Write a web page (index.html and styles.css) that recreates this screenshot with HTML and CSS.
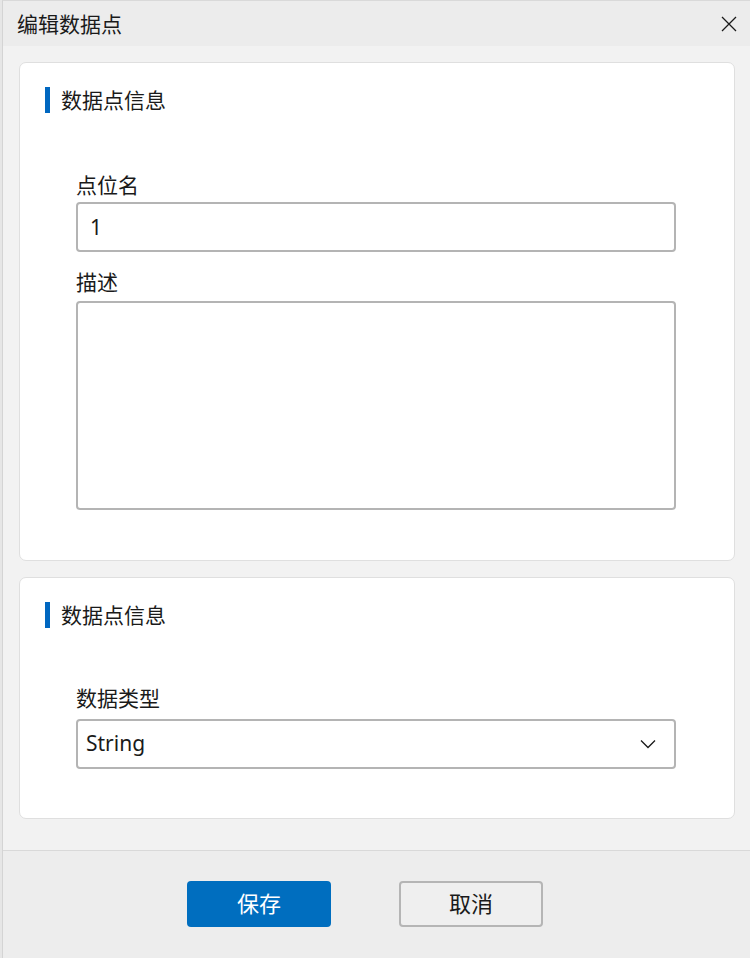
FILE: index.html
```html
<!DOCTYPE html>
<html lang="zh-CN">
<head>
<meta charset="utf-8">
<title>编辑数据点</title>
<link rel="stylesheet" href="styles.css">
</head>
<body>
<div class="strip"></div>
<div class="window">
  <header class="titlebar">
    <span class="title">编辑数据点</span>
    <span class="close" aria-label="关闭">
      <svg width="16" height="16" viewBox="0 0 16 16"><path d="M1 1 L15 15 M15 1 L1 15" stroke="#1a1a1a" stroke-width="1.3" fill="none"/></svg>
    </span>
  </header>
  <main class="content">
    <section class="card card-info">
      <div class="section-head"><span class="bar"></span><span class="section-title">数据点信息</span></div>
      <div class="form">
        <label class="label label-first">点位名</label>
        <div class="input">1</div>
        <label class="label label-second">描述</label>
        <div class="textarea"></div>
      </div>
    </section>
    <section class="card card-type">
      <div class="section-head"><span class="bar"></span><span class="section-title">数据点信息</span></div>
      <div class="form">
        <label class="label label-type">数据类型</label>
        <div class="input select">
          <span>String</span>
          <svg class="chev" width="16" height="10" viewBox="0 0 16 10"><path d="M1 1.5 L8 8.5 L15 1.5" stroke="#1a1a1a" stroke-width="1.3" fill="none"/></svg>
        </div>
      </div>
    </section>
  </main>
  <footer class="footer">
    <button class="btn btn-primary">保存</button>
    <button class="btn btn-default">取消</button>
  </footer>
</div>
</body>
</html>
```
FILE: styles.css
```css
* { box-sizing: border-box; }
html, body { margin: 0; padding: 0; }
body {
  width: 750px;
  height: 958px;
  display: flex;
  font-family: "Noto Sans", "Noto Sans CJK SC", sans-serif;
  color: #1a1a1a;
  background: #f4f4f4;
  overflow: hidden;
}
.strip { width: 2px; background: #e6e6e6; }
.window {
  flex: 1;
  display: flex;
  flex-direction: column;
  border-left: 1px solid #d4d4d4;
  border-top: 1px solid #d9d9d9;
}
.titlebar {
  height: 45px;
  background: #ececec;
  display: flex;
  align-items: center;
  justify-content: space-between;
  padding: 0 13px 0 14px;
}
.title { font-size: 21px; line-height: 26px; margin-top: 1px; }
.close { display: flex; margin-top: 1px; }
.content {
  flex: 1;
  background: #f2f2f2;
  padding: 16px 15px 0 16px;
  display: flex;
  flex-direction: column;
  gap: 16px;
}
.card {
  background: #fff;
  border: 1px solid #dfdfdf;
  border-radius: 7px;
  padding: 24px 25px;
}
.section-head { display: flex; align-items: center; height: 26px; }
.bar { width: 5px; height: 26px; background: #0067c0; }
.section-title { font-size: 21px; margin-left: 11px; line-height: 26px; margin-top: -1px; }
.form { padding: 0 33px 0 31px; display: flex; flex-direction: column; }
.label { font-size: 21px; line-height: 26px; }
.label-first { margin-top: 59px; margin-bottom: 4px; }
.label-second { margin-top: 17px; margin-bottom: 6px; }
.label-type { margin-top: 57px; margin-bottom: 8px; }
.input {
  height: 50px;
  border: 2px solid #b4b4b4;
  border-radius: 4px;
  font-size: 21px;
  display: flex;
  align-items: center;
  padding-left: 12px;
}
.textarea {
  height: 209px;
  border: 2px solid #b4b4b4;
  border-radius: 4px;
  margin-bottom: 26px;
}
.card-type .input { margin-bottom: 25px; }
.select { justify-content: space-between; padding-left: 8px; padding-right: 18px; }
.select span { margin-top: -2px; }
.footer {
  height: 108px;
  background: #ededed;
  border-top: 1px solid #d9d9d9;
  display: flex;
  align-items: center;
  justify-content: center;
  gap: 68px;
  padding-right: 23px;
}
.btn {
  width: 144px;
  height: 46px;
  font-family: "Noto Sans CJK SC", sans-serif;
  font-size: 22px;
  border-radius: 4px;
  padding: 0 0 4px;
  margin-top: -2px;
  cursor: pointer;
}
.btn-primary { background: #006ebf; color: #fff; border: none; }
.btn-default { background: #efefef; color: #1a1a1a; border: 2px solid #b5b5b5; }
```
